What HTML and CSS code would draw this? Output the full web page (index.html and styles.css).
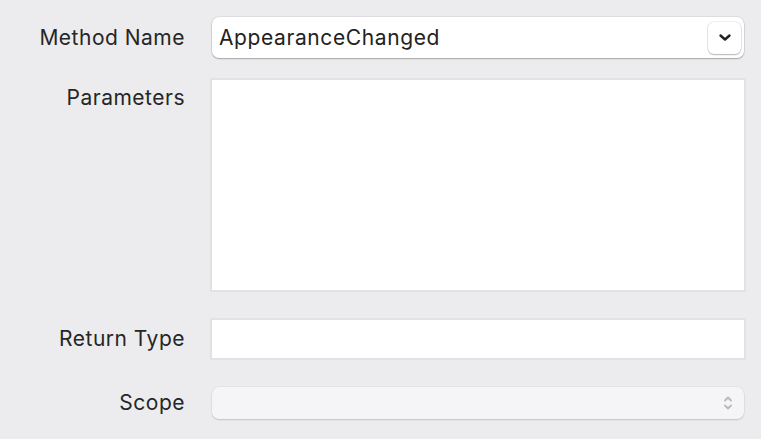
FILE: index.html
```html
<!DOCTYPE html>
<html>
<head>
<meta charset="utf-8">
<link rel="stylesheet" href="styles.css">
</head>
<body>
<div class="form">
  <div class="row row-method">
    <div class="label">Method Name</div>
    <div class="combo">
      <span class="combo-text">AppearanceChanged</span>
      <span class="combo-btn">
        <svg width="14" height="9" viewBox="0 0 14 9"><path d="M2.5 2.5 L7 6.5 L11.5 2.5" fill="none" stroke="#222" stroke-width="2.4" stroke-linecap="round" stroke-linejoin="round"/></svg>
      </span>
    </div>
  </div>

  <div class="row row-params">
    <div class="label label-top">Parameters</div>
    <div class="textarea"></div>
  </div>

  <div class="row row-return">
    <div class="label">Return Type</div>
    <div class="textfield"></div>
  </div>

  <div class="row">
    <div class="label">Scope</div>
    <div class="popup">
      <svg width="10" height="18" viewBox="0 0 10 18"><path d="M2 6.5 L5 3.5 L8 6.5 M2 11.5 L5 14.5 L8 11.5" fill="none" stroke="#b8b8bc" stroke-width="1.8" stroke-linecap="round" stroke-linejoin="round"/></svg>
    </div>
  </div>
</div>
</body>
</html>
```

FILE: styles.css
```css
html, body {
  margin: 0;
  padding: 0;
  background: #ececee;
  width: 761px;
  height: 439px;
  overflow: hidden;
  font-family: Inter, "Noto Sans", "Liberation Sans", sans-serif;
  color: #262626;
}

.form {
  display: flex;
  flex-direction: column;
  padding-top: 17px;
  width: 746px;
}

.row {
  display: flex;
  align-items: center;
  gap: 25px;
}

.row-method { margin-bottom: 20px; }
.row-params { align-items: flex-start; margin-bottom: 26px; }
.row-return { margin-bottom: 27px; }

.label {
  width: 185px;
  flex: none;
  text-align: right;
  font-size: 21px;
  letter-spacing: 0.5px;
  color: #262626;
  line-height: 26px;
}

.label-top {
  padding-top: 7px;
}

.combo {
  flex: 1;
  margin: 0 2px;
  height: 41px;
  background: #fff;
  border-radius: 7px;
  box-shadow: 0 0 0 0.5px rgba(0,0,0,0.12), 0 1px 1.5px rgba(0,0,0,0.25);
  display: flex;
  align-items: center;
  justify-content: space-between;
  padding: 0 3px 0 7px;
  box-sizing: border-box;
}

.combo-text {
  font-size: 21px;
  letter-spacing: 0.6px;
  color: #222;
}

.combo-btn {
  width: 33px;
  height: 32px;
  border-radius: 6px;
  background: #fff;
  box-shadow: 0 0 0 0.5px rgba(0,0,0,0.12), 0 1px 1.5px rgba(0,0,0,0.25);
  display: flex;
  align-items: center;
  justify-content: center;
}

.textarea {
  flex: 1;
  height: 214px;
  box-sizing: border-box;
  background: #fff;
  border: 2px solid #e2e2e4;
}

.textfield {
  flex: 1;
  height: 42px;
  box-sizing: border-box;
  background: #fff;
  border: 2px solid #e2e2e4;
}

.popup {
  flex: 1;
  margin: 0 2px;
  height: 32px;
  background: #f5f5f7;
  border-radius: 7px;
  box-shadow: 0 0 0 0.5px rgba(0,0,0,0.06), 0 1px 1.5px rgba(0,0,0,0.15);
  display: flex;
  align-items: center;
  justify-content: flex-end;
  padding-right: 11px;
  box-sizing: border-box;
}
```
